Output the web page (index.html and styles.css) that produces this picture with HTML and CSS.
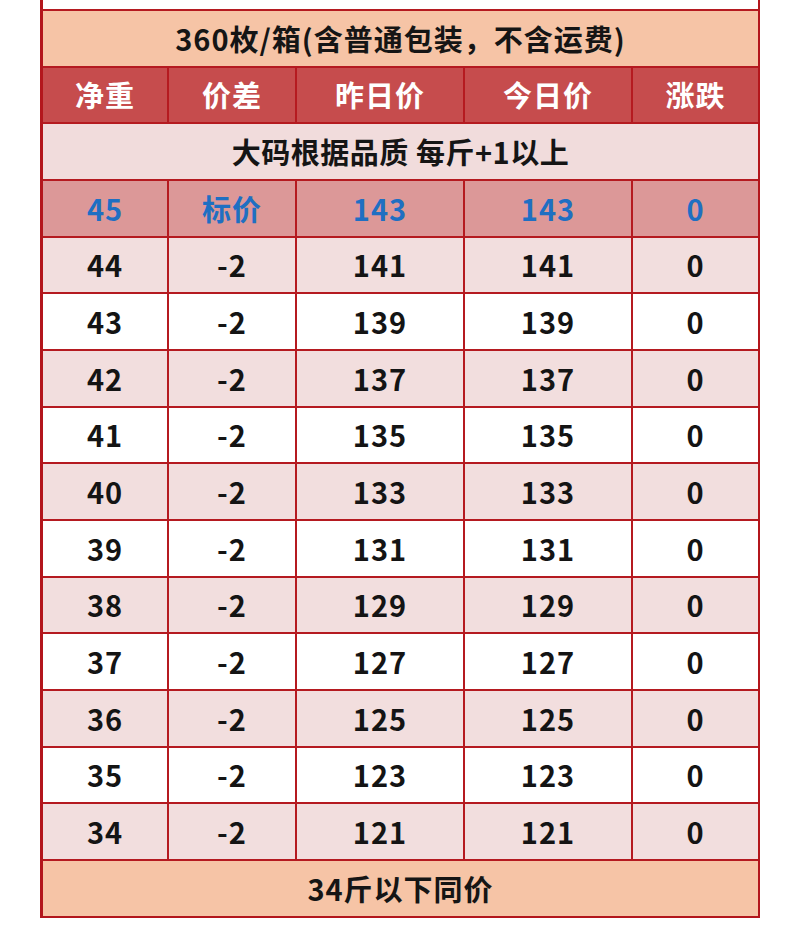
FILE: index.html
```html
<!DOCTYPE html>
<html lang="zh">
<head>
<meta charset="utf-8">
<title>价格表</title>
<link rel="stylesheet" href="styles.css">
</head>
<body>
<div class="stub"></div>
<div class="sheet">
  <div class="cell span title">360枚/箱(含普通包装，不含运费)</div>
  <div class="cell head">净重</div>
  <div class="cell head">价差</div>
  <div class="cell head">昨日价</div>
  <div class="cell head">今日价</div>
  <div class="cell head">涨跌</div>
  <div class="cell span note">大码根据品质 每斤+1以上</div>
  <div class="cell hl">45</div><div class="cell hl">标价</div><div class="cell hl">143</div><div class="cell hl">143</div><div class="cell hl">0</div>
  <div class="cell pk">44</div><div class="cell pk">-2</div><div class="cell pk">141</div><div class="cell pk">141</div><div class="cell pk">0</div>
  <div class="cell wt">43</div><div class="cell wt">-2</div><div class="cell wt">139</div><div class="cell wt">139</div><div class="cell wt">0</div>
  <div class="cell pk">42</div><div class="cell pk">-2</div><div class="cell pk">137</div><div class="cell pk">137</div><div class="cell pk">0</div>
  <div class="cell wt">41</div><div class="cell wt">-2</div><div class="cell wt">135</div><div class="cell wt">135</div><div class="cell wt">0</div>
  <div class="cell pk">40</div><div class="cell pk">-2</div><div class="cell pk">133</div><div class="cell pk">133</div><div class="cell pk">0</div>
  <div class="cell wt">39</div><div class="cell wt">-2</div><div class="cell wt">131</div><div class="cell wt">131</div><div class="cell wt">0</div>
  <div class="cell pk">38</div><div class="cell pk">-2</div><div class="cell pk">129</div><div class="cell pk">129</div><div class="cell pk">0</div>
  <div class="cell wt">37</div><div class="cell wt">-2</div><div class="cell wt">127</div><div class="cell wt">127</div><div class="cell wt">0</div>
  <div class="cell pk">36</div><div class="cell pk">-2</div><div class="cell pk">125</div><div class="cell pk">125</div><div class="cell pk">0</div>
  <div class="cell wt">35</div><div class="cell wt">-2</div><div class="cell wt">123</div><div class="cell wt">123</div><div class="cell wt">0</div>
  <div class="cell pk">34</div><div class="cell pk">-2</div><div class="cell pk">121</div><div class="cell pk">121</div><div class="cell pk">0</div>
  <div class="cell span title">34斤以下同价</div>
</div>
</body>
</html>
```
FILE: styles.css
```css
html, body {
  margin: 0;
  padding: 0;
  background: #ffffff;
}

body {
  font-family: "Noto Sans CJK SC", "Noto Sans", sans-serif;
  font-weight: 700;
  color: #141414;
}

.stub {
  margin-left: 40px;
  width: 715px;
  height: 9px;
  background: #ffffff;
  border-left: 3px solid #b3161c;
  border-right: 2px solid #b3161c;
}

.sheet {
  margin-left: 40px;
  width: 720px;
  box-sizing: border-box;
  display: grid;
  grid-template-columns: 124px 126px 166px 166px 125px;
  grid-auto-rows: 54.67px;
  gap: 2px;
  background: #b51a20;
  border-top: 2px solid #b51a20;
  border-bottom: 2px solid #b3161c;
  border-left: 3px solid #b3161c;
  border-right: 2px solid #b3161c;
}

.cell {
  display: flex;
  align-items: center;
  justify-content: center;
  font-size: 29px;
  line-height: 1;
  letter-spacing: 1px;
}

.span {
  grid-column: 1 / -1;
}

.title {
  background: #f6c4a6;
  color: #151515;
}

.head {
  background: #c64c4d;
  color: #ffffff;
}

.note {
  background: #f1dcdc;
  color: #151515;
  letter-spacing: 0.5px;
}

.hl {
  background: #dc9898;
  color: #1f6fc2;
}

.pk {
  background: #f2dede;
}

.wt {
  background: #ffffff;
}
```
